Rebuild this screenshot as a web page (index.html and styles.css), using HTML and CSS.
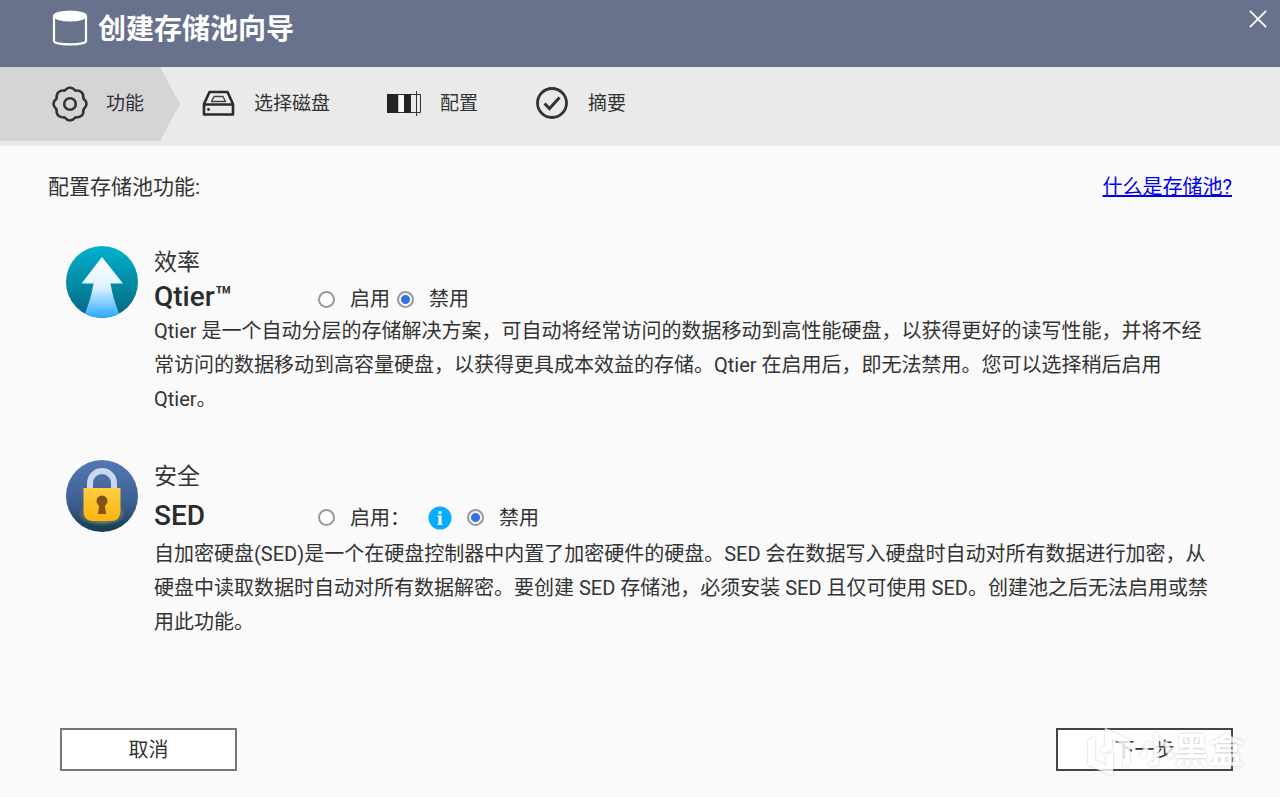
FILE: index.html
```html
<!DOCTYPE html>
<html lang="zh-CN">
<head>
    <meta charset="UTF-8">
    <meta name="viewport" content="width=device-width, initial-scale=1.0">
    <title>创建存储池向导</title>
    <link rel="stylesheet" href="styles.css">
</head>
<body>
    <header class="titlebar">
        <svg class="titlebar-icon" viewBox="0 0 36 36" aria-hidden="true">
            <path d="M2 6v25c0 4.500 32 4.500 32 0V6" fill="none" stroke="#fff" stroke-width="2.200"/>
            <ellipse cx="18" cy="6" rx="17" ry="5.500" fill="#fff"/>
        </svg>
        <h1>创建存储池向导</h1>
        <button type="button" class="close" aria-label="关闭">
            <svg viewBox="0 0 20 20"><path d="M1 1l18 18M19 1L1 19" stroke="#fff" stroke-width="2"/></svg>
        </button>
    </header>

    <ol class="steps">
        <li class="step active">
            <svg viewBox="0 0 36 36" fill="none" stroke="#333" stroke-width="2.600" stroke-linejoin="round">
                <path d="M12.500 4.600Q18-1.600 23.500 4.600Q31.900 4.100 31.400 12.500Q37.600 18 31.400 23.500Q31.900 31.900 23.500 31.400Q18 37.600 12.500 31.400Q4.100 31.900 4.600 23.500Q-1.600 18 4.600 12.500Q4.100 4.100 12.500 4.600z"/>
                <circle cx="18" cy="18" r="5.800"/>
            </svg>
            <span>功能</span>
        </li>
        <li class="step">
            <svg viewBox="0 0 36 36" fill="none" stroke="#2b2b2b" stroke-width="2.600" stroke-linejoin="round">
                <path d="M4 18L9.500 6h18L33 18v10.500H4zM4 18.500h29"/>
                <path d="M14 10.500h9l2.500 5h-14z" stroke="#444" stroke-width="1.400"/>
                <circle cx="8.500" cy="23.500" r="1.400" fill="#2b2b2b" stroke="none"/>
            </svg>
            <span>选择磁盘</span>
        </li>
        <li class="step">
            <svg viewBox="0 0 36 36" fill="none" stroke="#333">
                <path d="M1.500 8.500h33v18h-33zM24.500 8.500v18M30.500 5v25"/>
                <path d="M1 8h11.500v19H1zM18 8h6.500v19H18z" fill="#222" stroke="none"/>
                <path d="M12.500 9H18v17h-5.500z" fill="#f8f8f8" stroke="none"/>
            </svg>
            <span>配置</span>
        </li>
        <li class="step">
            <svg viewBox="0 0 36 36" fill="none" stroke="#333">
                <circle cx="18" cy="17" r="14.500" stroke-width="2.800"/>
                <path d="M10.500 17.500l5 5L25.500 11.500" stroke-width="3"/>
            </svg>
            <span>摘要</span>
        </li>
    </ol>

    <main class="content">
        <div class="intro">
            <p>配置存储池功能:</p>
            <a href="#">什么是存储池?</a>
        </div>

        <section class="feature">
            <svg class="feature-icon" viewBox="0 0 72 72" aria-hidden="true">
                <defs>
                    <linearGradient id="teal" x1="0" y1="0" x2="0" y2="1">
                        <stop offset="0" stop-color="#02b1cf"/>
                        <stop offset="1" stop-color="#046680"/>
                    </linearGradient>
                    <linearGradient id="arrow" x1="0" y1="0" x2="0" y2="1">
                        <stop offset="0" stop-color="#fff"/>
                        <stop offset=".5" stop-color="#dff1ff"/>
                        <stop offset="1" stop-color="#27a8ff"/>
                    </linearGradient>
                    <clipPath id="disc"><circle cx="36" cy="36" r="36"/></clipPath>
                </defs>
                <circle cx="36" cy="36" r="36" fill="url(#teal)"/>
                <path d="M36 11L57 37.500H44.500Q47 54 55 72H17Q25 54 27.500 37.500H15.500z" fill="url(#arrow)" clip-path="url(#disc)"/>
            </svg>
            <div class="feature-body">
                <h2>效率</h2>
                <div class="feature-row">
                    <h3>Qtier™</h3>
                    <label class="option"><input type="radio" name="qtier" value="on">启用</label>
                    <label class="option"><input type="radio" name="qtier" value="off" checked>禁用</label>
                </div>
                <p>Qtier 是一个自动分层的存储解决方案，可自动将经常访问的数据移动到高性能硬盘，以获得更好的读写性能，并将不经常访问的数据移动到高容量硬盘，以获得更具成本效益的存储。Qtier 在启用后，即无法禁用。您可以选择稍后启用 Qtier。</p>
            </div>
        </section>

        <section class="feature">
            <svg class="feature-icon" viewBox="0 0 72 72" aria-hidden="true">
                <defs>
                    <linearGradient id="navy" x1="0" y1="0" x2="0" y2="1">
                        <stop offset="0" stop-color="#5377b4"/>
                        <stop offset=".6" stop-color="#3e608f"/>
                        <stop offset="1" stop-color="#123a50"/>
                    </linearGradient>
                    <linearGradient id="gold" x1="0" y1="0" x2="0" y2="1">
                        <stop offset="0" stop-color="#ffce3f"/>
                        <stop offset="1" stop-color="#fbb412"/>
                    </linearGradient>
                    <radialGradient id="glow">
                        <stop offset=".5" stop-color="#b0a45c" stop-opacity=".8"/>
                        <stop offset="1" stop-color="#b0a45c" stop-opacity="0"/>
                    </radialGradient>
                </defs>
                <circle cx="36" cy="36" r="36" fill="url(#navy)"/>
                <ellipse cx="36" cy="54" rx="24" ry="12" fill="url(#glow)"/>
                <path d="M24 30V23a12 12 0 0 1 24 0v7" fill="none" stroke="#c8d8f3" stroke-width="6"/>
                <path d="M17.500 28h37v23q0 10-10 10h-17q-10 0-10-10z" fill="url(#gold)"/>
                <circle cx="36" cy="41" r="5.500" fill="#85501a"/>
                <path d="M33.500 43h5l1.500 11h-8z" fill="#85501a"/>
            </svg>
            <div class="feature-body">
                <h2>安全</h2>
                <div class="feature-row tall">
                    <h3>SED</h3>
                    <label class="option"><input type="radio" name="sed" value="on">启用：</label>
                    <svg class="info" viewBox="0 0 24 24" role="img" aria-label="信息">
                        <circle cx="12" cy="12" r="11.500" fill="#06adff"/>
                        <circle cx="12" cy="6.500" r="1.800" fill="#fff"/>
                        <path d="M9.500 9.500h4v8h1v1.200h-5v-1.200h1v-6.800h-1z" fill="#fff"/>
                    </svg>
                    <label class="option"><input type="radio" name="sed" value="off" checked>禁用</label>
                </div>
                <p>自加密硬盘(SED)是一个在硬盘控制器中内置了加密硬件的硬盘。SED 会在数据写入硬盘时自动对所有数据进行加密，从硬盘中读取数据时自动对所有数据解密。要创建 SED 存储池，必须安装 SED 且仅可使用 SED。创建池之后无法启用或禁用此功能。</p>
            </div>
        </section>
    </main>

    <footer class="actions">
        <button type="button" class="btn">取消</button>
        <button type="button" class="btn btn-next">下一步</button>
        <div class="watermark">
            <svg viewBox="0 0 42 48" aria-hidden="true">
                <path d="M0 12L7 9V32L18 37V27L25 24V48L0 37z" fill="#fff"/>
                <path d="M17 0L42 12V36L35 39V16L24 11V21L13 26V20L17 18z" fill="#fff"/>
            </svg>
            <span>小黑盒</span>
        </div>
    </footer>
</body>
</html>
```
FILE: styles.css
```css
:root {
    --bar-color: #69728d;
    --steps-color: #eaeaea;
    --active-color: #d5d5d5;
    --background-color: #fafafa;
    --text-color: #333;
}
* {
    box-sizing: border-box;
}
body {
    display: flex;
    flex-direction: column;
    min-height: 100vh;
    margin: 0;
    font-family: Roboto, "Noto Sans CJK SC", sans-serif;
    font-size: 20px;
    line-height: 34px;
    color: var(--text-color);
    background-color: var(--background-color);
}
h1, h2, h3, p {
    margin: 0;
}
button {
    font: inherit;
    color: inherit;
    cursor: pointer;
}

/* title bar */
.titlebar {
    display: flex;
    align-items: flex-start;
    gap: 10px;
    padding: 10px 12px 17px 52px;
    color: #fff;
    background-color: var(--bar-color);
}
.titlebar-icon {
    width: 36px;
    height: 36px;
}
.titlebar h1 {
    font-size: 28px;
    line-height: 40px;
    font-weight: bold;
}
.close {
    display: flex;
    margin-left: auto;
    padding: 0;
    border: none;
    background: none;
}
.close svg {
    width: 20px;
    height: 18px;
}

/* wizard steps */
.steps {
    display: flex;
    height: 79px;
    margin: 0;
    padding: 0 0 5px;
    list-style: none;
    font-size: 19px;
    line-height: 36px;
    background-color: var(--steps-color);
}
.step {
    display: flex;
    align-items: center;
    gap: 18px;
    padding: 0 36px 0 20px;
}
.step svg {
    width: 36px;
    height: 36px;
}
.step.active {
    padding-left: 52px;
    background-color: var(--active-color);
    clip-path: polygon(0 0, calc(100% - 20px) 0, 100% 50%, calc(100% - 20px) 100%, 0 100%);
}

/* content */
.content {
    flex: 1;
    padding: 24px 48px;
}
.intro {
    display: flex;
    justify-content: space-between;
    margin-bottom: 42px;
    font-size: 21px;
}
.intro a {
    font-size: 20px;
    color: #0000ee;
}
.feature {
    display: flex;
    gap: 16px;
    margin-bottom: 44px;
    padding: 0 20px 0 18px;
}
.feature-icon {
    flex: none;
    width: 72px;
    height: 72px;
}
.feature h2 {
    font-size: 23px;
    line-height: 34px;
    font-weight: normal;
}
.feature-row {
    display: flex;
    align-items: center;
    height: 34px;
}
.feature-row.tall {
    height: 43px;
}
.feature h3 {
    width: 164px;
    font-size: 28px;
    font-weight: 500;
    color: #2b2b2b;
}
.option {
    display: flex;
    align-items: center;
    gap: 15px;
    margin: 4px 7px 0 0;
}
.option input {
    appearance: none;
    width: 17px;
    height: 17px;
    margin: 0;
    border: 2px solid #999;
    border-radius: 50%;
    background-color: #fff;
}
.option input:checked {
    background: radial-gradient(circle, #3573df 4px, #f4f6fb 5px);
}
.info {
    width: 24px;
    height: 24px;
    margin: 4px 15px 0 11px;
}

/* footer */
.actions {
    position: relative;
    display: flex;
    justify-content: space-between;
    padding: 0 47px 26px 60px;
}
.btn {
    width: 177px;
    height: 43px;
    padding: 0;
    border: 2px solid #777;
    background-color: #fff;
}
.btn-next {
    border-color: #444;
}
.watermark {
    position: absolute;
    right: 36px;
    bottom: 20px;
    display: flex;
    align-items: center;
    gap: 9px;
    font-size: 35px;
    font-weight: bold;
    opacity: 0.8;
    color: #fff;
    text-shadow: 0 0 3px #bbb;
    pointer-events: none;
}
.watermark svg {
    width: 42px;
    height: 50px;
    filter: drop-shadow(0 0 1px #bbb);
}
```
